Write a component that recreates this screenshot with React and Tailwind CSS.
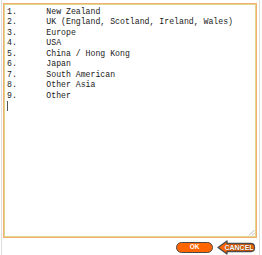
const lines = [
  '1.\tNew Zealand',
  '2.\tUK (England, Scotland, Ireland, Wales)',
  '3.\tEurope',
  '4.\tUSA',
  '5.\tChina / Hong Kong',
  '6.\tJapan',
  '7.\tSouth American',
  '8.\tOther Asia',
  '9.\tOther',
];

const CancelButton = () => (
  <button className="block w-[39px] h-[15px] p-0">
    <svg width="39" height="15" viewBox="0 0 39 15">
      <path
        d="M1 7.5 L10 1 L10 3.5 L34 3.5 Q37.5 3.5 37.5 7.5 Q37.5 11.5 34 11.5 L10 11.5 L10 14 Z"
        fill="#ff6600"
        stroke="#4a4a4a"
        strokeWidth="1.3"
        strokeLinejoin="round"
      />
      <text
        x="22"
        y="10.2"
        textAnchor="middle"
        fontSize="7"
        fontWeight="bold"
        fontFamily="Liberation Sans, Arial, sans-serif"
        fill="#fff"
        stroke="#6a2a00"
        strokeWidth="0.6"
        paintOrder="stroke"
      >
        CANCEL
      </text>
    </svg>
  </button>
);

export default function App() {
  return (
    <div className="w-[262px] h-[255px] bg-white overflow-hidden">
      <div className="ml-px w-[259px] h-full border-x border-[#dedede] flex flex-col">
        {/* text box */}
        <div className="relative ml-px mr-[2px] mt-[3px] h-[236px] border border-[#f4ad6c] shadow-[inset_0_0_0_1px_#dcd890] pl-[3px] pt-[3px]">
          <div className="font-['Liberation_Mono','Courier_New',monospace] text-[8.2px] leading-[10.45px] text-[#1a1a1a] whitespace-pre [tab-size:8]">
            {lines.map((l) => (
              <div key={l}>{l}</div>
            ))}
            <div className="h-[10.45px] flex items-center">
              <span className="block w-px h-[10px] bg-[#555]" />
            </div>
          </div>
          {/* resize grip */}
          <svg className="absolute right-[1px] bottom-[1px]" width="7" height="7" viewBox="0 0 7 7">
            <line x1="6.5" y1="1" x2="1" y2="6.5" stroke="#a8a8a8" strokeWidth="0.8" />
            <line x1="6.5" y1="4" x2="4" y2="6.5" stroke="#a8a8a8" strokeWidth="0.8" />
          </svg>
        </div>

        {/* buttons */}
        <div className="flex items-center justify-end gap-[4px] mt-[2px] mr-[3px]">
          <button className="w-[37px] h-[11px] rounded-full bg-[#ff6600] border-[1.5px] border-[#4a4a4a] flex items-center justify-center p-0">
            <span className="font-['Liberation_Sans',Arial,sans-serif] font-bold text-[6.5px] leading-none text-white">
              OK
            </span>
          </button>
          <CancelButton />
        </div>
      </div>
    </div>
  );
}
